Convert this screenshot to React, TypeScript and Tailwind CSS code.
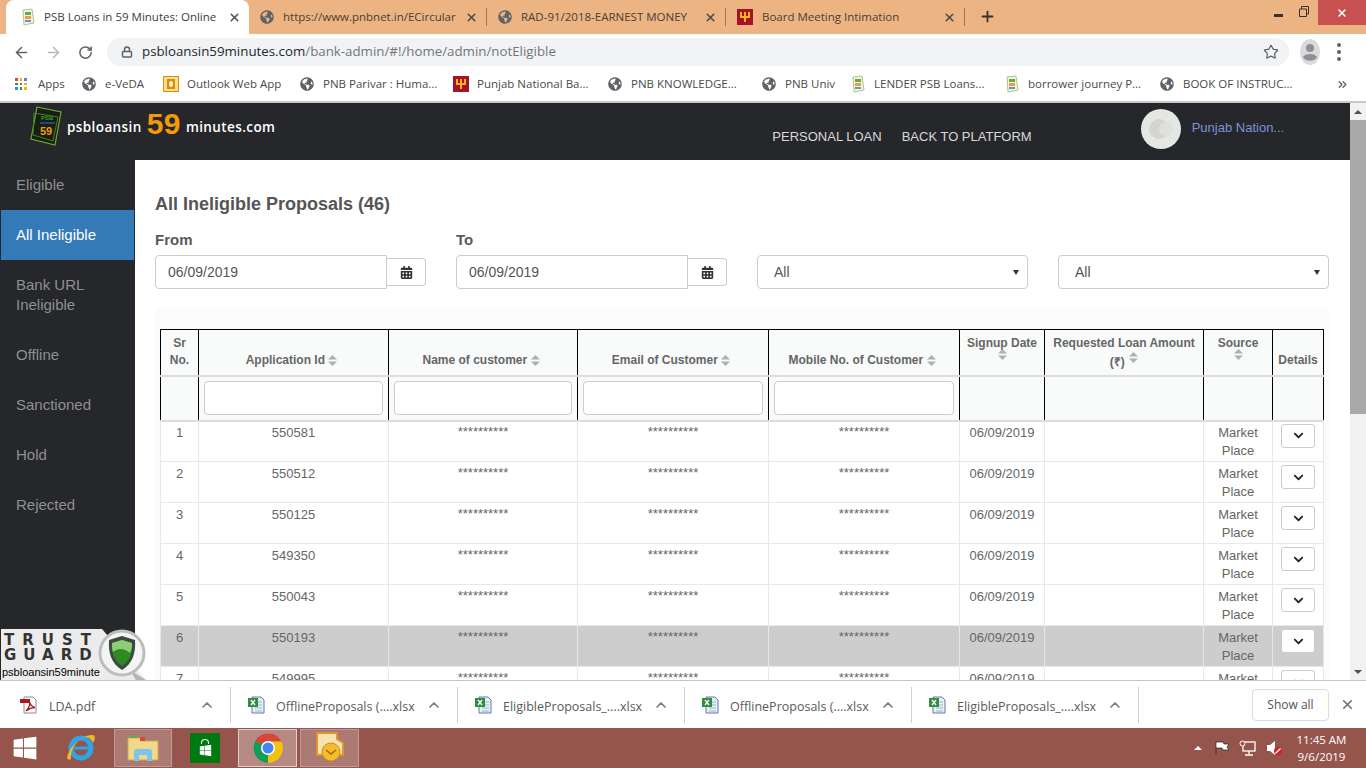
import React from "react";
import {ArrowLeft, ArrowRight, RotateCw, Lock, Star, X, Plus, ChevronUp, ChevronsRight} from "lucide-react";
import {FaGlobeAmericas, FaCalendarAlt, FaChevronDown, FaWindows} from "react-icons/fa";

const rows = [
    {sr: 1, id: "550581"},
    {sr: 2, id: "550512"},
    {sr: 3, id: "550125"},
    {sr: 4, id: "549350"},
    {sr: 5, id: "550043"},
    {sr: 6, id: "550193", active: true},
    {sr: 7, id: "549995"},
];

const bookmarks = [
    {icon: "globe", label: "e-VeDA", w: "w-[81px]"},
    {icon: "outlook", label: "Outlook Web App", w: "w-[137px]"},
    {icon: "globe", label: "PNB Parivar : Huma...", w: "w-[153px]"},
    {icon: "pnb", label: "Punjab National Ba...", w: "w-[155px]"},
    {icon: "globe", label: "PNB KNOWLEDGE...", w: "w-[154px]"},
    {icon: "globe", label: "PNB Univ", w: "w-[88px]"},
    {icon: "psb", label: "LENDER PSB Loans...", w: "w-[154px]"},
    {icon: "psb", label: "borrower journey P...", w: "w-[156px]"},
    {icon: "globe", label: "BOOK OF INSTRUC...", w: "w-[160px]"},
];

const menu = ["Offline", "Sanctioned", "Hold", "Rejected"];

const downloads = [
    {name: "LDA.pdf", pdf: true},
    {name: "OfflineProposals (....xlsx"},
    {name: "EligibleProposals_....xlsx"},
    {name: "OfflineProposals (....xlsx"},
    {name: "EligibleProposals_....xlsx"},
];

const PsbIcon = () => (
    <svg width="16" height="18" viewBox="0 0 16 18" className="shrink-0">
        <path d="M3 2 L12 1 L14 15 L4 17 Z" fill="#eef3e4" stroke="#a9c98a"/>
        <rect x="5" y="4" width="6" height="3" fill="#6aa84f"/>
        <rect x="5" y="8" width="6" height="3" fill="#e8a13a"/>
        <rect x="5" y="12" width="6" height="2" fill="#7a8cc0"/>
    </svg>
);

const PnbIcon = () => (
    <svg width="16" height="16" viewBox="0 0 16 16" className="shrink-0">
        <rect width="16" height="16" fill="#a5122a"/>
        <path d="M3 3h2v4h2V3h2v4h2V3h2v6H9v4H7V9H3Z" fill="#f3b51c"/>
    </svg>
);

const OutlookIcon = () => (
    <svg width="16" height="16" viewBox="0 0 16 16" className="shrink-0">
        <rect x="0.5" y="0.5" width="15" height="15" fill="#fbe08a" stroke="#e08a10"/>
        <rect x="4" y="3" width="8" height="10" fill="#e08a10"/>
        <ellipse cx="8" cy="8" rx="2" ry="3" fill="#fff3c4"/>
    </svg>
);

const Globe = () => <FaGlobeAmericas className="text-[#5f6368] text-[14px] shrink-0"/>;

const SortIcon = ({className}: {className?: string}) => (
    <svg width="9" height="11" viewBox="0 0 9 11" className={className}>
        <path d="M4.5 0 L9 4.5 H0 Z" fill="#b0b0b0"/>
        <path d="M4.5 11 L9 6.5 H0 Z" fill="#b0b0b0"/>
    </svg>
);

const ExcelIcon = () => (
    <svg width="18" height="18" viewBox="0 0 18 18" className="shrink-0">
        <path d="M5 1h9l3 3v13H5Z" fill="#e9eff7" stroke="#5c7ba6"/>
        <path d="M8 6h7M8 9h7M8 12h7M8 15h7" stroke="#9db4d3"/>
        <rect x="1" y="2" width="10" height="9" fill="#2f8f3f"/>
        <path d="M4 4l4 5M8 4l-4 5" stroke="#fff" strokeWidth="1.3"/>
    </svg>
);

const PdfIcon = () => (
    <svg width="18" height="18" viewBox="0 0 18 18" className="shrink-0">
        <path d="M4 1h9l3 3v13H4Z" fill="#fff" stroke="#8a8a8a"/>
        <rect x="0" y="3" width="10" height="4" fill="#b0171f"/>
        <path d="M6 15c3-3 4-7 3.500-9 1 3 2.500 5 5.500 5.500-3 0-6 1-9 3.500Z" fill="none" stroke="#b0171f" strokeWidth="1.300"/>
    </svg>
);

const ChromeIcon = () => (
    <svg width="30" height="30" viewBox="0 0 30 30">
        <path d="M15 15 L2.400 7.800 A15 15 0 0 1 28.500 8.500 L15 8.500 Z" fill="#db4437"/>
        <path d="M15 15 L15 8.500 L28.500 8.500 A15 15 0 0 1 15 30 Z" fill="#f4c20d"/>
        <path d="M15 15 L15 30 A15 15 0 0 1 2.400 7.800 Z" fill="#0f9d58"/>
        <circle cx="15" cy="15" r="7" fill="#fff"/>
        <circle cx="15" cy="15" r="5.500" fill="#4285f4"/>
    </svg>
);

const Tab = ({title, icon, width}: {title: string; icon: React.ReactNode; width: string}) => (
    <div className={`${width} h-[18px] my-[8px] flex items-center pl-[11px] pr-[8px] gap-[9px] border-r border-[#8d7a66]`}>
        {icon}
        <span className="flex-1 overflow-hidden whitespace-nowrap text-[11.5px] text-[#4b4038]">{title}</span>
        <X size={13} strokeWidth={3} className="text-[#4d4d4d] shrink-0"/>
    </div>
);

const TrustGuard = () => (
    <div className="absolute left-0 bottom-0 w-[146px] h-[52px] overflow-hidden">
        <svg width="146" height="52" viewBox="0 0 146 52" className="absolute left-0 top-0">
            <path d="M1 1 H102 L146 52 H1 Z" fill="#ececec"/>
            <path d="M130 42 L146 52 H136 Z" fill="#b5b5b5"/>
            <circle cx="122" cy="25" r="22" fill="#f4f4f4" stroke="#bdbdbd" strokeWidth="3"/>
            <path d="M122 8 L135 12 C136 26 132 36 122 42 C112 36 108 26 109 12 Z" fill="#3e4a3e"/>
            <path d="M122 12 L132 15 C133 26 129 33 122 38 C115 33 111 26 112 15 Z" fill="#2f8a22"/>
            <path d="M122 12 L132 15 C132 20 131 23 130 25 C124 20 118 20 113 24 C112 21 112 18 112 15 Z" fill="#8fce78"/>
        </svg>
        <div className="absolute left-[4px] top-[5px] text-[15px] leading-[14px] font-bold tracking-[8px] text-[#333] font-['DejaVu_Sans']">TRUST</div>
        <div className="absolute left-[4px] top-[20px] text-[15px] leading-[14px] font-bold tracking-[7px] text-[#333] font-['DejaVu_Sans']">GUARD</div>
        <div className="absolute left-[2px] top-[37px] text-[11px] leading-[14px] text-black">psbloansin59minute</div>
    </div>
);

const App: React.FC = () => {
    return (
        <div className="w-[1366px] h-[768px] overflow-hidden flex flex-col bg-white font-['Liberation_Sans',sans-serif]">
            {/* browser tabs */}
            <div className="h-[34px] shrink-0 bg-[#ecb482] flex items-start font-['Open_Sans',sans-serif]">
                <div className="w-[243px] ml-[6px] h-[34px] bg-white rounded-t-[8px] flex items-center pl-[14px] pr-[8px] gap-[8px]">
                    <PsbIcon/>
                    <span className="flex-1 overflow-hidden whitespace-nowrap text-[11.5px] text-[#3c3c3c]">PSB Loans in 59 Minutes: Online I</span>
                    <X size={13} strokeWidth={3} className="text-[#555] shrink-0"/>
                </div>
                <Tab title="https://www.pnbnet.in/ECircular.a" icon={<Globe/>} width="w-[238px]"/>
                <Tab title="RAD-91/2018-EARNEST MONEY" icon={<Globe/>} width="w-[239px]"/>
                <Tab title="Board Meeting Intimation" icon={<PnbIcon/>} width="w-[239px]"/>
                <Plus size={17} strokeWidth={2.500} className="ml-[14px] mt-[8px] text-[#333]"/>
                <div className="ml-auto flex items-start h-[25px]">
                    <div className="w-[9px] h-[3px] bg-[#333] mt-[14px] mr-[16px]"/>
                    <svg width="10" height="11" viewBox="0 0 10 11" className="mt-[6px] mr-[9px]">
                        <path d="M0.500 3 H7.500 V10.500 H0.500 Z M2.500 3 V0.500 H9.500 V8 H7.500" fill="none" stroke="#333"/>
                    </svg>
                    <div className="w-[48px] h-[25px] bg-[#c75050] flex items-center justify-center">
                        <X size={12} strokeWidth={3} className="text-white"/>
                    </div>
                </div>
            </div>

            {/* address bar */}
            <div className="h-[33px] shrink-0 flex items-center pt-[3px] bg-white font-['Open_Sans',sans-serif]">
                <ArrowLeft size={17} strokeWidth={2.200} className="ml-[13px] text-[#5f6368]"/>
                <ArrowRight size={17} strokeWidth={2.200} className="ml-[15px] text-[#b6b8ba]"/>
                <RotateCw size={15} strokeWidth={2.400} className="ml-[16px] text-[#5f6368]"/>
                <div className="ml-[14px] w-[1182px] h-[28px] rounded-full bg-[#f1f3f4] flex items-center pl-[14px] pr-[10px]">
                    <Lock size={12} strokeWidth={3} className="text-[#5f6368]"/>
                    <span className="ml-[9px] text-[13.300px] text-[#24282c]">psbloansin59minutes.com</span>
                    <span className="text-[13.300px] text-[#737678]">/bank-admin/#!/home/admin/notEligible</span>
                    <Star size={16} strokeWidth={1.800} className="ml-auto text-[#5f6368]"/>
                </div>
                <svg width="20" height="26" viewBox="0 0 20 26" className="ml-[11px]">
                    <ellipse cx="10" cy="13" rx="10" ry="13" fill="#d9dadc"/>
                    <circle cx="10" cy="9" r="4" fill="#8e9093"/>
                    <path d="M3 18c2-4 12-4 14 0-2 5-12 5-14 0Z" fill="#8e9093"/>
                </svg>
                <div className="ml-[17px] flex flex-col gap-[3px]">
                    <span className="w-[4px] h-[4px] rounded-full bg-[#5f6368]"/>
                    <span className="w-[4px] h-[4px] rounded-full bg-[#5f6368]"/>
                    <span className="w-[4px] h-[4px] rounded-full bg-[#5f6368]"/>
                </div>
            </div>

            {/* bookmarks */}
            <div className="h-[36px] shrink-0 flex items-center border-b-2 border-[#c9c9c9] pl-[15px] text-[11.500px] text-[#4a4a4a] font-['Open_Sans',sans-serif]">
                <div className="grid grid-cols-3 gap-[2px] w-[12px] h-[12px] shrink-0">
                    <span className="bg-[#db4437]"/><span className="bg-[#f4b400]"/><span className="bg-[#4285f4]"/>
                    <span className="bg-[#0f9d58]"/><span className="bg-[#db4437]"/><span className="bg-[#f4b400]"/>
                    <span className="bg-[#4285f4]"/><span className="bg-[#0f9d58]"/><span className="bg-[#f4b400]"/>
                </div>
                <span className="ml-[11px] w-[44px]">Apps</span>
                {bookmarks.map((b) => (
                    <div key={b.label + b.w} className={`${b.w} shrink-0 flex items-center whitespace-nowrap ${b.icon === "globe" ? "gap-[9px]" : "gap-[8px]"}`}>
                        {b.icon === "globe" && <Globe/>}
                        {b.icon === "outlook" && <OutlookIcon/>}
                        {b.icon === "pnb" && <PnbIcon/>}
                        {b.icon === "psb" && <PsbIcon/>}
                        <span>{b.label}</span>
                    </div>
                ))}
                <ChevronsRight size={13} strokeWidth={2.500} className="ml-auto mr-[17px] text-[#5f6368]"/>
            </div>

            {/* page */}
            <div className="flex-1 min-h-0 flex relative">
                <div className="w-[1350px] flex flex-col min-h-0">
                    <div className="h-[57px] shrink-0 bg-[#25272a] flex items-start">
                        <div className="w-[155px] pl-[30px] pt-[2px] shrink-0 flex items-center">
                            <svg width="36" height="42" viewBox="0 0 36 42">
                                <path d="M7 2 L31 7 L25 40 L1 34 Z" fill="#16200f" stroke="#6ea83c" strokeWidth="1.200"/>
                                <path d="M4 8 L28 12 L23 36 L3 30 Z" fill="none" stroke="#4d7a2c"/>
                                <text x="11" y="15" fontSize="6" fontWeight="700" fill="#2c9c3a" fontFamily="Liberation Sans">PSB</text>
                                <rect x="10" y="17" width="15" height="2" fill="#2c3f8f"/>
                                <text x="10" y="30" fontSize="11" fontWeight="700" fill="#f39a0b" fontFamily="Liberation Sans">59</text>
                            </svg>
                        </div>
                        <div className="ml-[-88px] h-[48px] flex items-center text-white font-['Open_Sans',sans-serif] font-semibold text-[13.500px] tracking-[0.400px] whitespace-nowrap">
                            <span>psbloansin</span>
                            <span className="mx-[5px] mb-[6px] text-[#f39a0b] text-[30px] leading-[30px] font-bold font-['Liberation_Sans',sans-serif]">59</span>
                            <span>minutes.com</span>
                        </div>
                        <div className="ml-[497px] mt-[26px] flex gap-[20px] text-[13px] leading-[16px] text-[#d8d8d8]">
                            <span>PERSONAL LOAN</span>
                            <span>BACK TO PLATFORM</span>
                        </div>
                        <div className="ml-[109px] mt-[6px] w-[40px] h-[40px] rounded-full bg-[#e5e7e3] flex items-center justify-center shrink-0">
                            <div className="w-[20px] h-[20px] rounded-full bg-[#d4d5d2]"/>
                            <div className="w-[14px] h-[14px] rounded-full bg-[#dfe0dd] -ml-[10px]"/>
                        </div>
                        <span className="ml-[11px] mt-[17px] text-[13px] leading-[15px] text-[#7d93d8]">Punjab Nation...</span>
                    </div>

                    <div className="flex-1 min-h-0 flex">
                        {/* sidebar */}
                        <div className="w-[135px] shrink-0 bg-[#25272a] text-[15px] leading-[20px] text-[#8f8f8f]">
                            <div className="px-[16px] py-[15px]">Eligible</div>
                            <div className="ml-[1px] mr-[1px] pl-[15px] pr-[16px] py-[15px] bg-[#337ab7] text-white">All Ineligible</div>
                            <div className="px-[16px] py-[15px]">Bank URL<br/>Ineligible</div>
                            {menu.map((m) => (
                                <div key={m} className="px-[16px] py-[15px]">{m}</div>
                            ))}
                        </div>

                        {/* content */}
                        <div className="flex-1 min-w-0 overflow-hidden bg-white pl-[20px] pr-[21px] pt-[34px] text-[#666]">
                            <h1 className="text-[18px] leading-[20px] font-bold text-[#555]">All Ineligible Proposals (46)</h1>
                            <div className="mt-[16px] grid grid-cols-4 gap-x-[30px] items-end">
                                {["From", "To"].map((label) => (
                                    <div key={label}>
                                        <div className="text-[15px] leading-[20px] font-bold text-[#5a5a5a] mb-[5px]">{label}</div>
                                        <div className="flex items-center">
                                            <div className="w-[232px] h-[34px] border border-[#ccc] rounded-l-[4px] pl-[12px] flex items-center text-[14px] text-[#555]">06/09/2019</div>
                                            <div className="w-[39px] h-[28px] border border-l-0 border-[#ccc] rounded-r-[4px] flex items-center justify-center">
                                                <FaCalendarAlt className="text-[#333] text-[13px]"/>
                                            </div>
                                        </div>
                                    </div>
                                ))}
                                {[0, 1].map((k) => (
                                    <div key={k} className="h-[34px] border border-[#ccc] rounded-[4px] pl-[16px] pr-[8px] flex items-center justify-between text-[14px] text-[#555]">
                                        <span>All</span>
                                        <span className="w-0 h-0 border-x-[3px] border-x-transparent border-t-[5px] border-t-[#333]"/>
                                    </div>
                                ))}
                            </div>

                            <div className="mt-[20px] bg-[#fafbfa] px-[5px] pt-[20px]">
                                <table className="w-[1163px] table-fixed border-collapse text-[12px] leading-[17px] text-[#666]">
                                    <colgroup>
                                        <col className="w-[38px]"/>
                                        <col className="w-[190px]"/>
                                        <col className="w-[189px]"/>
                                        <col className="w-[191px]"/>
                                        <col className="w-[191px]"/>
                                        <col className="w-[85px]"/>
                                        <col className="w-[159px]"/>
                                        <col className="w-[69px]"/>
                                        <col className="w-[51px]"/>
                                    </colgroup>
                                    <thead>
                                        <tr className="h-[46px] bg-[#f9fbfb] font-bold text-center">
                                            <th className="border border-black border-b-2 border-b-[#ddd] align-bottom pb-[6px]">Sr<br/>No.</th>
                                            {["Application Id", "Name of customer", "Email of Customer", "Mobile No. of Customer"].map((h) => (
                                                <th key={h} className="border border-black border-b-2 border-b-[#ddd] align-bottom pb-[6px]">
                                                    {h} <SortIcon className="inline-block mr-[4px] align-[-2px]"/>
                                                </th>
                                            ))}
                                            <th className="border border-black border-b-2 border-b-[#ddd] align-top pt-[5px]">
                                                Signup Date
                                                <SortIcon className="block mx-auto -mt-[3px]"/>
                                            </th>
                                            <th className="border border-black border-b-2 border-b-[#ddd] align-top pt-[5px] px-[6px]">
                                                Requested Loan Amount (₹) <SortIcon className="inline-block ml-[1px] align-[3px]"/>
                                            </th>
                                            <th className="border border-black border-b-2 border-b-[#ddd] align-top pt-[5px]">
                                                Source
                                                <SortIcon className="block mx-auto -mt-[3px]"/>
                                            </th>
                                            <th className="border border-black border-b-2 border-b-[#ddd] align-bottom pb-[6px]">Details</th>
                                        </tr>
                                    </thead>
                                    <tbody>
                                        <tr className="h-[45px] bg-[#f9fbfb] border-b-2 border-b-[#ddd]">
                                            <td className="border-x border-black"/>
                                            {[0, 1, 2, 3].map((k) => (
                                                <td key={k} className="border-x border-black px-[5px]">
                                                    <div className="h-[34px] bg-white border border-[#ccc] rounded-[4px]"/>
                                                </td>
                                            ))}
                                            <td className="border-x border-black"/>
                                            <td className="border-x border-black"/>
                                            <td className="border-x border-black"/>
                                            <td className="border-x border-black"/>
                                        </tr>
                                        {rows.map((r) => {
                                            // first row sits under the 2px filter border, so it needs 1px less
                                            const pad = r.sr === 1 ? "pt-[2px]" : "pt-[3px]";
                                            const starPad = r.sr === 1 ? "pt-[1px]" : "pt-[2px]";
                                            return (
                                                <tr key={r.sr} className={`h-[41px] text-center text-[13px] leading-[18px] ${r.active ? "bg-[#cdcdcd]" : "bg-white"}`}>
                                                    <td className={`border border-[#e6e8ec] align-top ${pad}`}>{r.sr}</td>
                                                    <td className={`border border-[#e6e8ec] align-top ${pad}`}>{r.id}</td>
                                                    {[0, 1, 2].map((k) => (
                                                        <td key={k} className={`border border-[#e6e8ec] align-top ${starPad}`}>**********</td>
                                                    ))}
                                                    <td className={`border border-[#e6e8ec] align-top ${pad}`}>06/09/2019</td>
                                                    <td className="border border-[#e6e8ec]"/>
                                                    <td className={`border border-[#e6e8ec] align-top ${pad}`}>Market<br/>Place</td>
                                                    <td className={`border border-[#e6e8ec] align-top ${pad}`}>
                                                        <div className="mx-auto w-[34px] h-[24px] bg-white border border-[#ccc] rounded-[3px] flex items-center justify-center">
                                                            <FaChevronDown className="text-[#222] text-[11px]"/>
                                                        </div>
                                                    </td>
                                                </tr>
                                            );
                                        })}
                                    </tbody>
                                </table>
                            </div>
                        </div>
                    </div>
                </div>

                {/* page scrollbar */}
                <div className="w-[16px] shrink-0 bg-[#f1f1f1] flex flex-col items-center">
                    <div className="h-[17px] flex items-center">
                        <span className="w-0 h-0 border-x-[4px] border-x-transparent border-b-[4px] border-b-[#505050]"/>
                    </div>
                    <div className="w-full h-[294px] bg-[#a8a8a8]"/>
                    <div className="mt-auto h-[17px] flex items-center">
                        <span className="w-0 h-0 border-x-[4px] border-x-transparent border-t-[4px] border-t-[#505050]"/>
                    </div>
                </div>

                <TrustGuard/>
            </div>

            {/* downloads */}
            <div className="h-[48px] shrink-0 bg-white border-t border-[#c4c4c4] flex items-center text-[12.500px] text-[#5a5a5a] font-['Open_Sans',sans-serif]">
                {downloads.map((d, i) => (
                    <div key={i} className={`h-[36px] shrink-0 border-r border-[#d0d0d0] flex items-center pr-[15px] ${i === 0 ? "w-[231px] pl-[20px]" : "w-[227px] pl-[16px]"}`}>
                        {d.pdf ? <PdfIcon/> : <ExcelIcon/>}
                        <span className="ml-[11px] mt-[5px] flex-1 whitespace-nowrap">{d.name}</span>
                        <ChevronUp size={16} strokeWidth={2.500} className="text-[#7a7a7a]"/>
                    </div>
                ))}
                <div className="ml-auto w-[77px] h-[32px] border border-[#dadce0] rounded-[4px] flex items-center justify-center text-[12px] text-[#4f5357]">Show all</div>
                <X size={15} strokeWidth={2.500} className="mx-[11px] text-[#6e6e6e]"/>
            </div>

            {/* windows taskbar */}
            <div className="h-[40px] shrink-0 bg-[#95554c] flex items-center text-white font-['Open_Sans',sans-serif]">
                <FaWindows className="ml-[12px] text-[26px] text-white"/>
                <svg width="32" height="32" viewBox="0 0 32 32" className="ml-[27px]">
                    <circle cx="16" cy="16" r="10" fill="none" stroke="#2fa4e7" strokeWidth="5"/>
                    <rect x="9" y="14.500" width="15" height="3" fill="#2fa4e7"/>
                    <path d="M2 26C4 14 18 2 28 3c3 1 2 5 0 8-1-3-4-6-8-6C12 7 5 18 6 27c-1 1-3 1-4-1Z" fill="#f2b824"/>
                </svg>
                <div className="ml-[17px] w-[58px] h-[38px] border border-[#c19a94] bg-[#ab7a72] flex items-center justify-center">
                    <svg width="32" height="28" viewBox="0 0 32 28">
                        <path d="M1 4h12l2 3h16v19H1Z" fill="#f1d98b" stroke="#c9a94f"/>
                        <rect x="4" y="1" width="5" height="3" fill="#5fae4e"/>
                        <rect x="13" y="3" width="5" height="4" fill="#d9483b"/>
                        <path d="M7 27V18a3 3 0 0 1 3-3h12a3 3 0 0 1 3 3v9h-5v-6h-8v6Z" fill="#7fc4ea"/>
                    </svg>
                </div>
                <div className="ml-[18px] w-[30px] h-[30px] bg-[#007a10] flex flex-col items-center justify-center">
                    <span className="w-[8px] h-[5px] border border-b-0 border-white rounded-t-full"/>
                    <FaWindows className="text-white text-[13px]"/>
                </div>
                <div className="ml-[18px] w-[59px] h-[38px] border border-[#e2cfcb] bg-[#b58a83] flex items-center justify-center">
                    <ChromeIcon/>
                </div>
                <div className="ml-[3px] w-[59px] h-[38px] border border-[#c19a94] bg-[#ab7a72] flex items-center justify-center">
                    <svg width="32" height="32" viewBox="0 0 32 32">
                        <path d="M3 1h20v6l6 4v12H3Z" fill="#f7e3b0" stroke="#e2932b" strokeWidth="2"/>
                        <circle cx="17" cy="20" r="9" fill="#f5bd2e" stroke="#cf8a17"/>
                        <path d="M12 18l5 4 5-4" fill="none" stroke="#a86a10" strokeWidth="1.500"/>
                    </svg>
                </div>
                <div className="ml-auto flex items-center">
                    <span className="w-0 h-0 border-x-[4px] border-x-transparent border-b-[4px] border-b-white mr-[12px]"/>
                    <svg width="16" height="16" viewBox="0 0 16 16" className="mr-[9px]">
                        <path d="M2 1v14M2 2h7l1 2h5l-2 3 2 3H9L8 8H2" fill="#fff" stroke="#222" strokeWidth="0.700"/>
                    </svg>
                    <svg width="17" height="16" viewBox="0 0 17 16" className="mr-[10px]">
                        <rect x="4" y="2" width="12" height="9" fill="none" stroke="#fff" strokeWidth="1.300"/>
                        <circle cx="3.500" cy="3.500" r="2.500" fill="#95554c" stroke="#fff"/>
                        <path d="M10 11v3M6 15h8" stroke="#fff" strokeWidth="1.300"/>
                    </svg>
                    <svg width="16" height="16" viewBox="0 0 16 16" className="mr-[10px]">
                        <path d="M1 5h3l5-4v14l-5-4H1Z" fill="#fff"/>
                        <circle cx="12" cy="11" r="4" fill="#d8202a"/>
                        <path d="M9.500 13.500l5-5" stroke="#fff" strokeWidth="1.300"/>
                    </svg>
                    <div className="w-[59px] mr-[15px] text-center text-[11.500px] leading-[17px] text-white">
                        <div>11:45 AM</div>
                        <div>9/6/2019</div>
                    </div>
                </div>
            </div>
        </div>
    );
};

export default App;
